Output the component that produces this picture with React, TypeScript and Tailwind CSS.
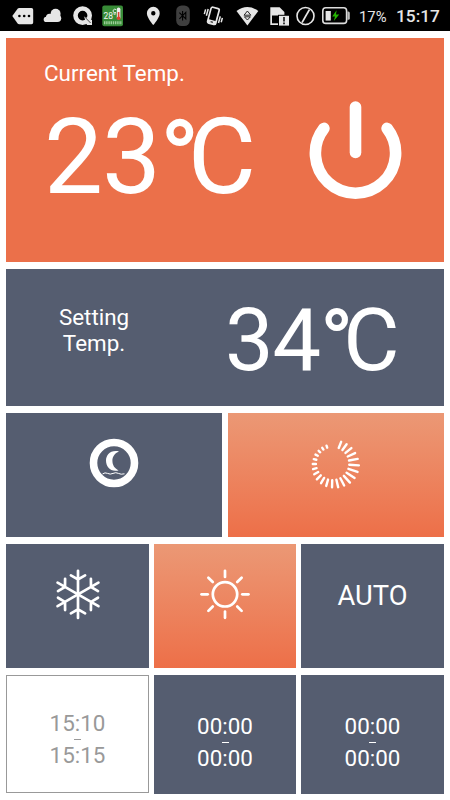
import React from "react";

const slate = "bg-[#555d70]";
const warm = "bg-linear-to-b from-[#eb9875] to-[#ed6f48]";

// Length of each spinner tick grows towards the right hand side
const ticks = [
  9, 9.5, 10, 10.5, 11.2, 12, 12, 12, 11.5, 10.5, 10, 9.5, 9, 8.5, 8, 7, 6, 5.5, 5, 5, 4.5, 4.5, 4.5,
];

function StatusBar() {
  return (
    <div className="flex h-[31px] items-center bg-black pl-3 text-[#e6e6e6]">
      {/* Message */}
      <svg width="22" height="22" viewBox="0 0 22 22">
        <path d="M0.3 11 L5.6 3.8 Q6.2 3 7.2 3 H19.5 Q21.2 3 21.2 4.7 V17.5 Q21.2 19.2 19.5 19.2 H7.2 Q6.2 19.2 5.6 18.4 Z" fill="#e6e6e6" />
        <circle cx="7.4" cy="11" r="1.3" fill="#000" />
        <circle cx="12.2" cy="11" r="1.3" fill="#000" />
        <circle cx="17" cy="11" r="1.3" fill="#000" />
      </svg>
      {/* Cloud */}
      <svg className="ml-[9px]" width="19" height="22" viewBox="0 0 19 22" fill="#e6e6e6">
        <circle cx="12.6" cy="8.8" r="5" />
        <circle cx="6.6" cy="12.4" r="3.6" />
        <circle cx="3.4" cy="14.4" r="2.7" />
        <circle cx="14.4" cy="13.2" r="3.8" />
        <rect x="3.4" y="11" width="11" height="6" />
      </svg>
      {/* Q */}
      <svg className="ml-[11px]" width="20" height="22" viewBox="0 0 20 22">
        <circle cx="9.6" cy="10.6" r="7.1" fill="none" stroke="#e6e6e6" strokeWidth="4.6" />
        <path d="M11 11.5 L19 15 V20 H14 Z" fill="#e6e6e6" />
        <path d="M10.8 11 L17.6 18" stroke="#222" strokeWidth="0.8" />
      </svg>
      {/* Thermostat app */}
      <svg className="ml-[9px]" width="22" height="22" viewBox="0 0 22 22">
        <rect x="0.3" y="0.5" width="20.7" height="20.8" rx="2" fill="#388b37" />
        <text x="1.4" y="13.6" fontSize="8.5" fontFamily="Roboto, sans-serif" fill="#f2f2f2">28°</text>
        <path d="M14 4.6 A1.8 1.8 0 1 0 14 7.4" fill="none" stroke="#f2f2f2" strokeWidth="0.9" />
        <rect x="14.8" y="2.5" width="3.6" height="12" rx="1.8" fill="#eee" />
        <rect x="15.8" y="7" width="1.6" height="6" fill="#d8432f" />
        <circle cx="16.6" cy="13.2" r="1.8" fill="#d8432f" />
        <path d="M2 17.8 H20" stroke="#9fd09b" strokeWidth="3" strokeDasharray="1.4 0.8" />
      </svg>
      {/* Location */}
      <svg className="ml-[22px]" width="14" height="22" viewBox="0 0 14 22">
        <path fillRule="evenodd" d="M7.3 1.8 A6.4 6.4 0 0 1 13.7 8.2 C13.7 13 7.3 20 7.3 20 S0.9 13 0.9 8.2 A6.4 6.4 0 0 1 7.3 1.8 Z M7.3 6.1 A2.2 2.2 0 1 0 7.3 10.5 A2.2 2.2 0 1 0 7.3 6.1 Z" fill="#e6e6e6" />
      </svg>
      {/* Bluetooth */}
      <svg className="ml-[16px]" width="14" height="22" viewBox="0 0 14 22">
        <rect x="0.2" y="0.5" width="13.6" height="20.5" rx="5.5" fill="#3f3f3f" />
        <path d="M3.4 7.6 L9.8 14 V7.4 L3.4 13.8 M6.6 6 V15.4" fill="none" stroke="#000" strokeWidth="1.1" />
      </svg>
      {/* Vibrate */}
      <svg className="ml-[13px]" width="21" height="22" viewBox="0 0 21 22" fill="none" stroke="#e6e6e6">
        <g transform="rotate(15 10.3 10.8)">
          <rect x="6.2" y="2.6" width="8.4" height="16.4" rx="1.6" strokeWidth="1.7" />
          <path d="M6.2 17 H14.6" strokeWidth="3.4" />
          <path d="M9.2 17.2 H11.6" stroke="#000" strokeWidth="1" />
          <path d="M3.6 5.6 V12.5 M1.2 6.6 V11.5 M17.2 9.5 V16.4 M19.6 10.5 V15" strokeWidth="1.5" />
        </g>
      </svg>
      {/* Wifi */}
      <svg className="ml-[12px]" width="23" height="22" viewBox="0 0 23 22">
        <path d="M0.5 6 Q11.3 -1.8 22.3 6 L11.4 20.4 Z" fill="#e6e6e6" />
        <path d="M11.4 6 L14.8 10.2 H8 Z M8.4 11.8 H14.4 L11.4 15 Z" fill="#e6e6e6" stroke="#111" strokeWidth="0.9" />
      </svg>
      {/* SIM alert */}
      <svg className="ml-[11px]" width="20" height="22" viewBox="0 0 20 22">
        <path d="M0.3 2.2 H9.6 L14.4 7 V20 H0.3 Z" fill="#e6e6e6" />
        <path d="M2 10.5 H8.5 V18.3 H2 Z" fill="#000" />
        <path d="M8 9.8 H19.5 V21 H8 Z" fill="#000" />
        <rect x="9" y="10.8" width="10" height="9.8" fill="#e6e6e6" />
        <path d="M14 12 V16.4 M14 17.6 V19.2" stroke="#000" strokeWidth="1.5" />
      </svg>
      {/* No data */}
      <svg className="ml-[6px]" width="20" height="22" viewBox="0 0 20 22" fill="none" stroke="#e6e6e6">
        <circle cx="9.5" cy="11" r="8.5" strokeWidth="1.6" />
        <path d="M13.4 4.6 L6 17.6" strokeWidth="1.8" />
      </svg>
      {/* Battery */}
      <svg className="ml-[6px]" width="29" height="22" viewBox="0 0 29 22">
        <rect x="0.8" y="2.8" width="23.8" height="15.6" rx="3" fill="none" stroke="#ddd" strokeWidth="1.6" />
        <path d="M25.4 6.4 H26.4 Q27.8 6.4 27.8 8 V13.2 Q27.8 14.8 26.4 14.8 H25.4 Z" fill="#bbb" />
        <rect x="3.6" y="6" width="5.2" height="9.6" fill="#e6e6e6" />
        <path d="M14.6 5.2 L10.2 11.6 H13 L11.8 16 L17.2 9.6 H14 Z" fill="#24b400" />
      </svg>
      <span className="ml-[8px] w-[37px] pt-[3px] text-[14.8px] leading-none">17%</span>
      <span className="pt-[3px] text-[17.3px] leading-none font-medium">15:17</span>
    </div>
  );
}

function Timer({ from, to, empty }: { from: string; to: string; empty?: boolean }) {
  return (
    <div
      className={
        empty
          ? "flex h-[118px] flex-col items-center border border-[#999] bg-white pt-[34px] text-[22.4px] leading-[27px] text-[#999]"
          : `flex h-[119px] flex-col items-center ${slate} pt-[38px] text-[22.4px] leading-[27px] text-white`
      }
    >
      <span>{from}</span>
      <span className="my-[2px] h-px w-[7px] bg-current" />
      <span>{to}</span>
    </div>
  );
}

export default function App() {
  return (
    <div className="h-[800px] w-[450px] overflow-hidden bg-white font-['Roboto',sans-serif]">
      <StatusBar />

      <div className="flex flex-col px-[6px] pt-[7px] text-white">
        {/* Current temperature */}
        <div className="flex h-[224px] justify-between bg-[#eb704a] pl-[38px]">
          <div className="pt-[21px]">
            <div className="text-[22.4px] leading-[28px]">Current Temp.</div>
            <div className="mt-[9px] text-[105px] leading-[124px] whitespace-nowrap">
              <span className="tracking-[-1px]">23</span>
              <span className="text-[102px] leading-none font-bold tracking-[-12px]">°</span>C
            </div>
          </div>
          <svg className="mt-[62px] mr-[42px] shrink-0" width="96" height="102" viewBox="0 0 96 102" fill="none" stroke="#fff" strokeWidth="11.6" strokeLinecap="round">
            <path d="M17.9 28.4 A40.1 40.1 0 1 0 81.1 28.4" />
            <path d="M49.5 7 V52.5" />
          </svg>
        </div>

        {/* Setting temperature */}
        <div className={`mt-[7px] flex h-[137px] ${slate}`}>
          <div className="w-[176px] pt-[35px] text-center text-[22.4px] leading-[26px]">
            Setting
            <br />
            Temp.
          </div>
          <div className="pt-[20px] pl-[43px] text-[86.5px] leading-[104px] whitespace-nowrap">
            <span className="tracking-[-1px]">34</span>
            <span className="text-[85px] leading-none font-bold tracking-[-10px]">°</span>C
          </div>
        </div>

        {/* Sleep / power modes */}
        <div className="mt-[7px] grid h-[124px] grid-cols-2 gap-[6px]">
          <div className={`flex justify-center ${slate}`}>
            <svg className="mt-[25px]" width="50" height="50" viewBox="0 0 50 50">
              <circle cx="25" cy="25" r="20.5" fill="none" stroke="#fff" strokeWidth="7.6" />
              <path d="M30 13.4 C21 11.6 17 17.5 17 22.6 C17 29 22 34.5 29.6 32.4 C25.4 30.4 23.4 27 23.4 22.8 C23.4 18.4 25.8 15 30 13.4 Z" fill="#fff" />
              <path d="M13.5 36 Q16 34 18.6 35.4 T24 35.4 T29.4 35.4 T35.5 35.8" fill="none" stroke="#fff" strokeWidth="1" />
            </svg>
          </div>
          <div className={`flex justify-center ${warm}`}>
            <svg className="mt-[23px]" width="56" height="56" viewBox="0 0 56 56" stroke="#fff" strokeWidth="2.4" strokeLinecap="round">
              {ticks.map((len, i) => (
                <path key={i} d={`M24.6 10.8 v${-(len - 2.4)}`} transform={`rotate(${21.5 + i * 14.53} 24.6 27.5)`} />
              ))}
            </svg>
          </div>
        </div>

        {/* Cool / heat / auto */}
        <div className="mt-[7px] grid h-[124px] grid-cols-[143px_142px_143px] gap-[5px]">
          <div className={`flex justify-center ${slate}`}>
            <svg className="mt-[25px]" width="50" height="52" viewBox="0 0 50 52" fill="none" stroke="#fff" strokeWidth="2.7" strokeLinecap="round">
              {[0, 60, 120, 180, 240, 300].map((a) => (
                <path key={a} d="M25 25.4 V1.8 M17.9 6.4 L25 10.4 L32.1 6.4" transform={`rotate(${a} 25 25.4)`} />
              ))}
            </svg>
          </div>
          <div className={`flex justify-center ${warm}`}>
            <svg className="mt-[25px]" width="50" height="52" viewBox="0 0 50 52" fill="none" stroke="#fff" strokeWidth="2.7" strokeLinecap="round">
              <circle cx="25" cy="25.3" r="12.2" />
              {[0, 45, 90, 135, 180, 225, 270, 315].map((a) => (
                <path key={a} d="M25 1.8 V8" transform={`rotate(${a} 25 25.3)`} />
              ))}
            </svg>
          </div>
          <div className={`${slate} pt-[36px] text-center text-[27.3px] leading-[33px]`}>AUTO</div>
        </div>

        {/* Timers */}
        <div className="mt-[7px] grid grid-cols-[143px_142px_143px] gap-[5px]">
          <Timer from="15:10" to="15:15" empty />
          <Timer from="00:00" to="00:00" />
          <Timer from="00:00" to="00:00" />
        </div>
      </div>
    </div>
  );
}
